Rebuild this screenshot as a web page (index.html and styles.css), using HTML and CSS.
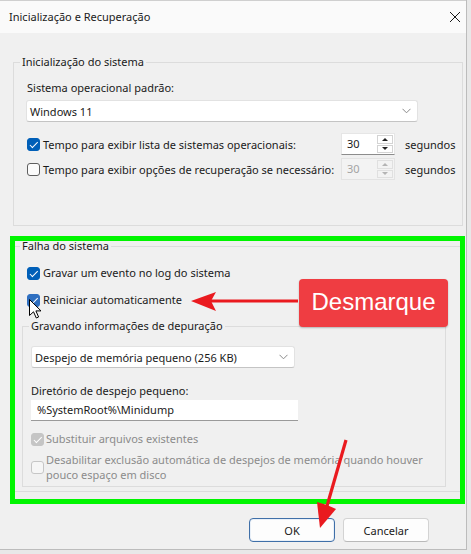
FILE: index.html
```html
<!DOCTYPE html>
<html lang="pt">
<head>
<meta charset="utf-8">
<title>Inicialização e Recuperação</title>
<link rel="stylesheet" href="styles.css">
</head>
<body>
<div class="window">
  <div class="titlebar">
    <span class="title">Inicialização e Recuperação</span>
    <svg class="close" width="12" height="12" viewBox="0 0 12 12"><path d="M1 1 L11 11 M11 1 L1 11" stroke="#1a1a1a" stroke-width="1"/></svg>
  </div>
  <div class="content">
    <fieldset class="group g1">
      <legend>Inicialização do sistema</legend>
      <div class="g1-body">
        <div class="field-label">Sistema operacional padrão:</div>
        <div class="select sel1"><span>Windows 11</span><svg width="9" height="6" viewBox="0 0 9 6"><path d="M0.5 0.8 L4.5 4.8 L8.5 0.8" fill="none" stroke="#8a8a8a" stroke-width="1"/></svg></div>
        <div class="row row-first">
          <span class="chk checked"></span>
          <span>Tempo para exibir lista de sistemas operacionais:</span>
          <div class="spin">
            <span class="spin-val">30</span>
            <span class="spin-btns"><span class="sb"><span class="tri up"></span></span><span class="sb"><span class="tri down"></span></span></span>
          </div>
          <span class="unit">segundos</span>
        </div>
        <div class="row row-second">
          <span class="chk"></span>
          <span>Tempo para exibir opções de recuperação se necessário:</span>
          <div class="spin disabled">
            <span class="spin-val">30</span>
            <span class="spin-btns"><span class="sb"><span class="tri up"></span></span><span class="sb"><span class="tri down"></span></span></span>
          </div>
          <span class="unit">segundos</span>
        </div>
      </div>
    </fieldset>

    <fieldset class="group g2">
      <legend>Falha do sistema</legend>
      <div class="g2-body">
        <div class="check-row"><span class="chk checked"></span><span>Gravar um evento no log do sistema</span></div>
        <div class="check-row second"><span class="chk checked hover"></span><span>Reiniciar automaticamente</span></div>
        <fieldset class="group g3">
          <legend>Gravando informações de depuração</legend>
          <div class="g3-body">
            <div class="select sel2"><span>Despejo de memória pequeno (256 KB)</span><svg width="9" height="6" viewBox="0 0 9 6"><path d="M0.5 0.8 L4.5 4.8 L8.5 0.8" fill="none" stroke="#8a8a8a" stroke-width="1"/></svg></div>
            <div class="field-label dir-label">Diretório de despejo pequeno:</div>
            <div class="textbox">%SystemRoot%\Minidump</div>
            <div class="check-row dis first-dis"><span class="chk checked disabled"></span><span>Substituir arquivos existentes</span></div>
            <div class="check-row dis multi"><span class="chk disabled"></span><span>Desabilitar exclusão automática de despejos de memória quando houver<br>pouco espaço em disco</span></div>
          </div>
        </fieldset>
      </div>
    </fieldset>

    <div class="buttons">
      <button class="btn primary">OK</button>
      <button class="btn">Cancelar</button>
    </div>
  </div>

  <div class="highlight"></div>
  <div class="callout">Desmarque</div>
  <svg class="annot" width="467" height="550" viewBox="0 0 467 550">
    <path d="M298 301 L208 301" stroke="#ea1a1f" stroke-width="3.2" fill="none"/>
    <path d="M191 301 L216 292 L211 301 L216 311 Z" fill="#ea1a1f"/>
    <path d="M346 440 L327 506" stroke="#ea1a1f" stroke-width="3.2" fill="none"/>
    <path d="M320 528 L317 502 L327 505 L336 509 Z" fill="#ea1a1f"/>
    <path d="M29.5 299.5 L29.5 315.5 L33.5 311.8 L36.3 318 L38.6 317 L35.9 310.9 L41 310.9 Z" fill="#fff" stroke="#000" stroke-width="1" stroke-linejoin="round"/>
  </svg>
</div>
</body>
</html>
```

FILE: styles.css
```css
body {
  margin: 0;
  background: #e8e8e8;
  font-family: "Noto Sans", "Open Sans", sans-serif;
  font-size: 11px;
  color: #1a1a1a;
}

.window {
  position: relative;
  width: 466px;
  height: 549px;
  background: #f0f0f0;
  border-right: 1px solid #bcbcbc;
  border-bottom: 1px solid #bcbcbc;
  white-space: nowrap;
}

.titlebar {
  box-sizing: border-box;
  height: 33px;
  background: #fafafa;
  border-top: 1px solid #cfcfcf;
  display: flex;
  align-items: center;
  justify-content: space-between;
  padding: 0 5px 1px 9px;
}

.title { line-height: 16px; }

.content {
  padding: 21px 0 0 13px;
}

.group {
  margin: 0;
  padding: 0;
  border: 1px solid #dcdcdc;
  min-width: 0;
  box-sizing: border-box;
}

.group legend {
  margin-left: 6px;
  padding: 0 2px;
  line-height: 16px;
}

.g1 { width: 450px; height: 172px; }
.g1-body { padding: 10px 0 0 13px; }

.field-label { line-height: 16px; }

.select {
  box-sizing: border-box;
  height: 22px;
  background: #fff;
  border: 1px solid #e2e2e2;
  border-bottom-color: #c4c4c4;
  border-radius: 3px;
  display: flex;
  align-items: center;
  justify-content: space-between;
  padding: 0 6px 0 3px;
}

.sel1 { margin-top: 4px; margin-left: -1px; width: 392px; }

.row {
  display: grid;
  grid-template-columns: 16px 298px 54px auto;
  align-items: center;
  height: 22px;
}
.row-first { margin-top: 11px; }
.row-second { margin-top: 3px; }

.unit { margin-left: 10px; }

.chk {
  position: relative;
  box-sizing: border-box;
  width: 13px;
  height: 13px;
  border: 1px solid #5e5e5e;
  border-radius: 3px;
  background: #fbfbfb;
  flex: none;
}
.chk.checked {
  background: #005fb8;
  border-color: #005fb8;
}
.chk.checked::after {
  content: "";
  position: absolute;
  left: 3.5px;
  top: 1px;
  width: 3px;
  height: 6.5px;
  border: solid #fff;
  border-width: 0 1.4px 1.4px 0;
  transform: rotate(45deg);
}
.chk.checked.hover {
  background: #2f6fc0;
  border-color: #2f6fc0;
}
.chk.disabled {
  border-color: #c6c6c6;
  background: #f6f6f6;
}
.chk.checked.disabled {
  background: #c5c5c5;
  border-color: #c5c5c5;
}

.spin {
  box-sizing: border-box;
  width: 54px;
  height: 22px;
  display: flex;
  background: #fff;
  border: 1px solid #e6e6e6;
  border-bottom-color: #8c8c8c;
}
.spin-val {
  flex: 1;
  padding-left: 5px;
  line-height: 19px;
}
.spin-btns {
  width: 16px;
  display: flex;
  flex-direction: column;
  padding: 1px 1px 1px 0;
  gap: 1px;
}
.sb {
  flex: 1;
  border: 1px solid #d4d4d4;
  display: flex;
  align-items: center;
  justify-content: center;
  background: #fff;
}
.tri {
  width: 0;
  height: 0;
  border-left: 3px solid transparent;
  border-right: 3px solid transparent;
}
.tri.up { border-bottom: 3px solid #222; }
.tri.down { border-top: 3px solid #222; }

.spin.disabled {
  background: #f3f3f3;
  border-color: #e3e3e3;
  color: #a3a3a3;
}
.spin.disabled .sb { background: #f3f3f3; border-color: #e0e0e0; }
.spin.disabled .tri.up { border-bottom-color: #b4b4b4; }
.spin.disabled .tri.down { border-top-color: #b4b4b4; }

.g2 { width: 450px; height: 254px; margin-top: 12px; }
.g2-body { padding: 11px 0 0 13px; }

.check-row {
  display: flex;
  align-items: center;
  gap: 3px;
  line-height: 16px;
}
.check-row.second { margin-top: 11px; }

.g3 { width: 424px; height: 169px; margin-top: 10px; margin-left: -5px; }
.g3-body { padding: 12px 0 0 8px; }

.sel2 { width: 264px; }
.dir-label { margin-top: 15px; }

.textbox {
  box-sizing: border-box;
  width: 267px;
  height: 21px;
  margin-top: 1px;
  background: #fff;
  border-bottom: 1px solid #9a9a9a;
  padding-left: 6px;
  line-height: 20px;
}

.check-row.dis { color: #8b8b8b; gap: 2px; }
.first-dis { margin-top: 10px; }
.multi { margin-top: 5px; line-height: 15px; }

.buttons {
  display: flex;
  justify-content: flex-end;
  gap: 8px;
  margin-top: 26px;
  padding-right: 37px;
}

.btn {
  box-sizing: border-box;
  width: 86px;
  height: 24px;
  font: inherit;
  color: #1a1a1a;
  background: #fdfdfd;
  border: 1px solid #d3d3d3;
  border-bottom-color: #b9b9b9;
  border-radius: 4px;
  padding: 0;
}
.btn.primary {
  border: 1px solid #3f6fa8;
  box-shadow: inset 0 0 0 1px #e9f0f8;
}

.highlight {
  position: absolute;
  left: 10px;
  top: 236px;
  width: 455px;
  height: 268px;
  box-sizing: border-box;
  border: 5px solid #00f500;
}

.callout {
  position: absolute;
  left: 299px;
  top: 279px;
  width: 149px;
  height: 48px;
  box-sizing: border-box;
  background: #ef3d42;
  border-radius: 4px;
  color: #fff;
  font-family: "Liberation Sans", Arial, sans-serif;
  font-size: 24px;
  display: flex;
  align-items: center;
  justify-content: center;
  padding-bottom: 2px;
  box-shadow: 0 1px 2px rgba(0,0,0,0.25);
}

.annot {
  position: absolute;
  left: 0;
  top: 0;
  pointer-events: none;
}
```
